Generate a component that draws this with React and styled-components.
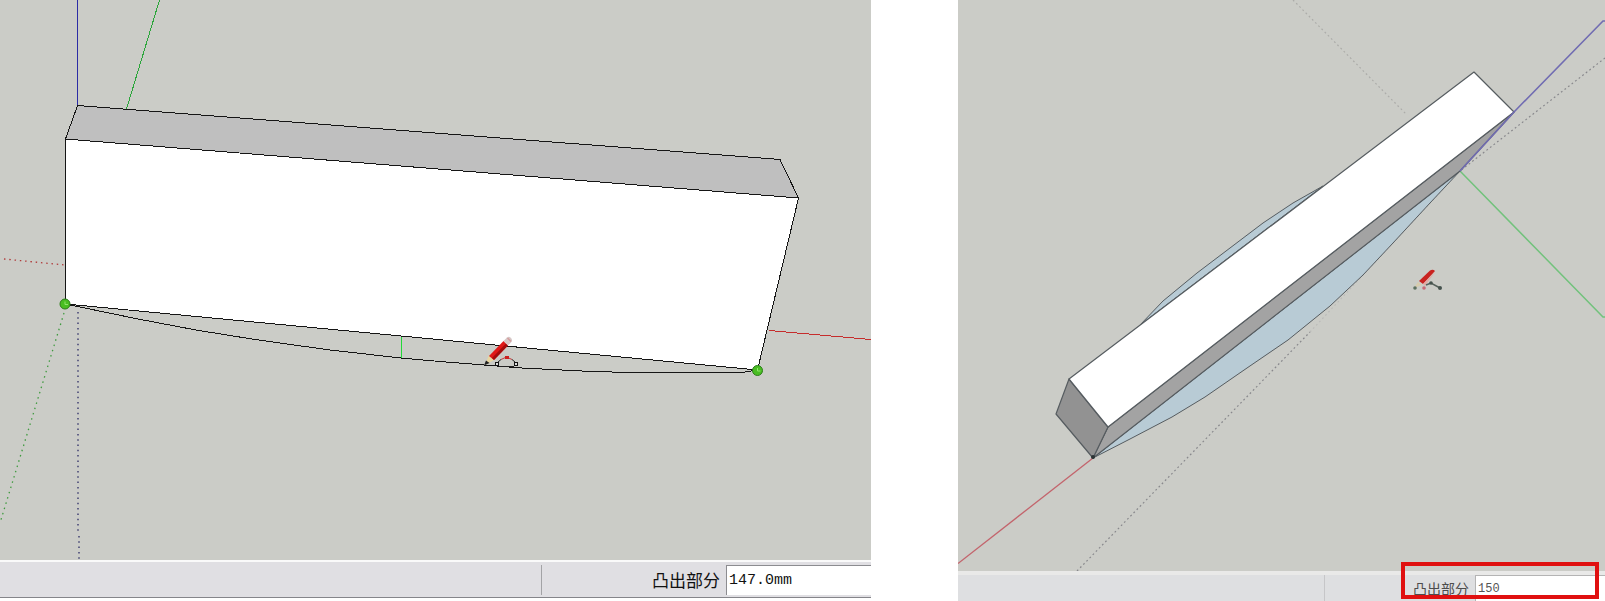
import React, { useState } from "react";
import styled, { createGlobalStyle } from "styled-components";

const CANVAS_COLOR = "#cbccc7";
const EDGE_COLOR = "#151515";
const SOFT_EDGE_COLOR = "#565c60";
const GLASS_COLOR = "#b8cbd5";

export default function App() {
  const [bulge, setBulge] = useState("147.0mm");
  const [typedBulge, setTypedBulge] = useState("150");

  return (
    <>
      <GlobalStyle />
      <Page>
        <Panel $grow={871}>
          <ArcDrawing />
          <StatusBar>
            <StatusMessage />
            <Measurement>
              <MeasureLabel htmlFor="bulge">凸出部分</MeasureLabel>
              <MeasureInput
                id="bulge"
                type="text"
                value={bulge}
                onChange={(e) => setBulge(e.target.value)}
              />
            </Measurement>
          </StatusBar>
        </Panel>

        <Panel $grow={647}>
          <BoxDrawing />
          <StatusBar $compact>
            <StatusMessage $compact />
            <Measurement $compact>
              <MeasureLabel htmlFor="typed-bulge" $compact>
                凸出部分
              </MeasureLabel>
              <MeasureInput
                id="typed-bulge"
                type="text"
                value={typedBulge}
                onChange={(e) => setTypedBulge(e.target.value)}
                $compact
              />
            </Measurement>
            <Highlight />
          </StatusBar>
        </Panel>
      </Page>
    </>
  );
}

function ArcDrawing() {
  return (
    <Scene viewBox="0 0 871 560" shapeRendering="crispEdges" aria-hidden="true">
      {/* axes */}
      <path d="M77.5 0V106" stroke="#2b2ba5" />
      <path d="M159.5 0L126.5 109" stroke="#2ba63a" />
      <path d="M769 330.5L871 339.5" stroke="#c62c2c" />
      <g shapeRendering="geometricPrecision" strokeWidth="1.3">
        <path d="M4 259L65 265" stroke="#b03a3a" strokeDasharray="1.5 3.8" />
        <path d="M64 313L0 523" stroke="#3f9a3f" strokeDasharray="1.5 4" />
        <path
          d="M78 312V532M79 536V560"
          stroke="#2c2c66"
          strokeDasharray="1.5 3.8"
        />
      </g>

      {/* block */}
      <g stroke={EDGE_COLOR} strokeLinejoin="round">
        <path d="M77.5 105.5L780 159.5L798.5 198L65.5 139Z" fill="#bfbfbf" />
        <path d="M65.5 139L798.5 198L757.5 370L65.5 304Z" fill="#fff" />
        <path
          d="M65.5 304L138 319L196 330L255 339.5L330 350L401 358L440 361.5L522 368L582 371L627 372.5L742 372.5L757 370"
          fill="none"
        />
      </g>
      <path d="M401.5 337V358" stroke="#22d838" />

      <g shapeRendering="geometricPrecision">
        <EndPoint x={65} y={304} />
        <EndPoint x={757.5} y={370.5} />

        {/* arc tool cursor */}
        <path d="M485 365L489 355L494 360Z" fill="#e8d6a0" />
        <path d="M484 365.5L486 360.5L489.5 363Z" fill="#222" />
        <path d="M489 356L503.5 341L508 345.5L494 360Z" fill="#e01818" />
        <path d="M492 358L506 343.5L508 345.5L494 360Z" fill="#a30d0d" />
        <path
          d="M503.5 341L507 337.5Q509 336 511 338Q513 340 511 342.5L508 345.5Z"
          fill="#d7c9c8"
        />
        <path d="M507.5 338L511 341.5" stroke="#d59b9b" strokeWidth="1.5" />
        <path
          d="M498 362L501 359.5M512 359.5L515 362M499 366.5H514"
          fill="none"
          stroke="#222"
        />
        <path d="M501 359.5L506.5 357L512 359.5" fill="none" stroke="#c23a3a" />
        <rect x="505" y="356" width="4" height="3" fill="#cc2020" />
        <rect x="495.5" y="362.5" width="3" height="3" fill="#ddd" stroke="#111" />
        <rect x="514.5" y="362.5" width="3" height="3" fill="#ddd" stroke="#111" />
      </g>
    </Scene>
  );
}

function EndPoint({ x, y }) {
  return (
    <g>
      <circle cx={x} cy={y} r="5" fill="#49bd22" stroke="#2b7d18" />
      <path
        d={`M${x} ${y - 2.5}V${y + 0.5}H${x + 3}`}
        fill="none"
        stroke="#8fe46a"
      />
    </g>
  );
}

function BoxDrawing() {
  return (
    <Scene viewBox="0 0 647 571" aria-hidden="true">
      {/* axes running behind the box */}
      <g fill="none" stroke="#88888c" strokeWidth="1.2" strokeDasharray="1.8 2.7">
        <path d="M335 0L449 115" stroke="#acaca9" />
        <path d="M647 58L502 171" />
        <path d="M119 571L352 332" />
        <path d="M352 332L502 171" stroke="#bbbbb9" />
      </g>
      <path d="M0 563.5L135 458" stroke="#c3646c" strokeWidth="1.3" />
      <path d="M502 171L645 317H647" fill="none" stroke="#72c27c" strokeWidth="1.5" />

      {/* curved glass */}
      <g stroke={SOFT_EDGE_COLOR} strokeLinejoin="round" fill={GLASS_COLOR}>
        <path d="M182 325L205 301L239 273L272 248L305 223L335 203L365 186Z" />
        <path d="M135 458L172 439L214 417L247 397L289 368L330 340L372 306L405 275L435 243L472 203L502 171Z" />
      </g>

      {/* box */}
      <g stroke={SOFT_EDGE_COLOR} strokeWidth="1.2" strokeLinejoin="round">
        <path d="M150 427L556 112L502 171L135 458Z" fill="#a3a3a3" />
        <path d="M111 379L98 414L135 458L150 427Z" fill="#929292" />
        <path d="M516 72L556 112L150 427L111 379Z" fill="#fff" />
      </g>
      <path
        d="M647 21H645L556 112L502 171"
        fill="none"
        stroke="#716cb2"
        strokeWidth="1.6"
      />
      <circle cx="135" cy="457" r="2" fill="#2c3335" />

      {/* arc tool cursor */}
      <path d="M461 281L472 270.500Q475 269 477 271L465 284Z" fill="#c92320" />
      <path d="M465 284L477 272L467 286Z" fill="#e3aaa4" />
      <path d="M456 288L460 282L464 285Z" fill="#d7ccae" />
      <path d="M468 285L473 283L482 288" fill="none" stroke="#55615b" strokeWidth="1.5" />
      <circle cx="457" cy="288" r="1.8" fill="#5d7060" />
      <circle cx="466" cy="288" r="1.8" fill="#c66a78" />
      <circle cx="473" cy="283" r="1.8" fill="#45524d" />
      <circle cx="482" cy="288" r="2" fill="#45524d" />
    </Scene>
  );
}

const GlobalStyle = createGlobalStyle`
  * {
    box-sizing: border-box;
  }

  body {
    margin: 0;
    background: #fff;
  }
`;

const Page = styled.main`
  display: flex;
  gap: 87px;
  align-items: flex-start;
  overflow: hidden;
`;

const Panel = styled.section`
  flex: ${({ $grow }) => $grow} 1 0;
  min-width: 0;
`;

const Scene = styled.svg`
  display: block;
  width: 100%;
  height: auto;
  background: ${CANVAS_COLOR};
`;

const StatusBar = styled.div`
  position: relative;
  display: flex;
  height: ${({ $compact }) => ($compact ? "30px" : "38px")};
  padding: ${({ $compact }) => ($compact ? "0" : "3px 0 2px")};
  border-top: ${({ $compact }) => ($compact ? "4px solid #e9e9e8" : "2px solid #fafafa")};
  border-bottom: ${({ $compact }) => ($compact ? "none" : "1px solid #85858a")};
  background: ${({ $compact }) => ($compact ? "#dedfe1" : "#e0dfe3")};
`;

const StatusMessage = styled.div`
  flex: 1;
  border-right: 1px solid ${({ $compact }) => ($compact ? "#c6c6c8" : "#a3a3a6")};
`;

const Measurement = styled.div`
  display: flex;
  justify-content: flex-end;
  align-items: stretch;
  width: ${({ $compact }) => ($compact ? "280px" : "329px")};
`;

const MeasureLabel = styled.label`
  display: flex;
  align-items: center;
  padding-right: 6px;
  color: ${({ $compact }) => ($compact ? "#4c4c4c" : "#111")};
  font-family: "Noto Sans CJK SC", sans-serif;
  font-size: ${({ $compact }) => ($compact ? "14px" : "17px")};
  line-height: 20px;
`;

const MeasureInput = styled.input`
  width: ${({ $compact }) => ($compact ? "130px" : "145px")};
  padding: 0 2px;
  border: 0 solid ${({ $compact }) => ($compact ? "#b4b4b4" : "#8c8c90")};
  border-width: 1px 0 0 1px;
  border-radius: 0;
  outline: none;
  background: #fff;
  color: ${({ $compact }) => ($compact ? "#555" : "#111")};
  font-family: "Liberation Mono", monospace;
  font-size: ${({ $compact }) => ($compact ? "12px" : "15px")};
`;

const Highlight = styled.div`
  position: absolute;
  top: -13px;
  right: 6px;
  width: 198px;
  height: 37px;
  border: 4px solid #e01010;
  pointer-events: none;
`;
